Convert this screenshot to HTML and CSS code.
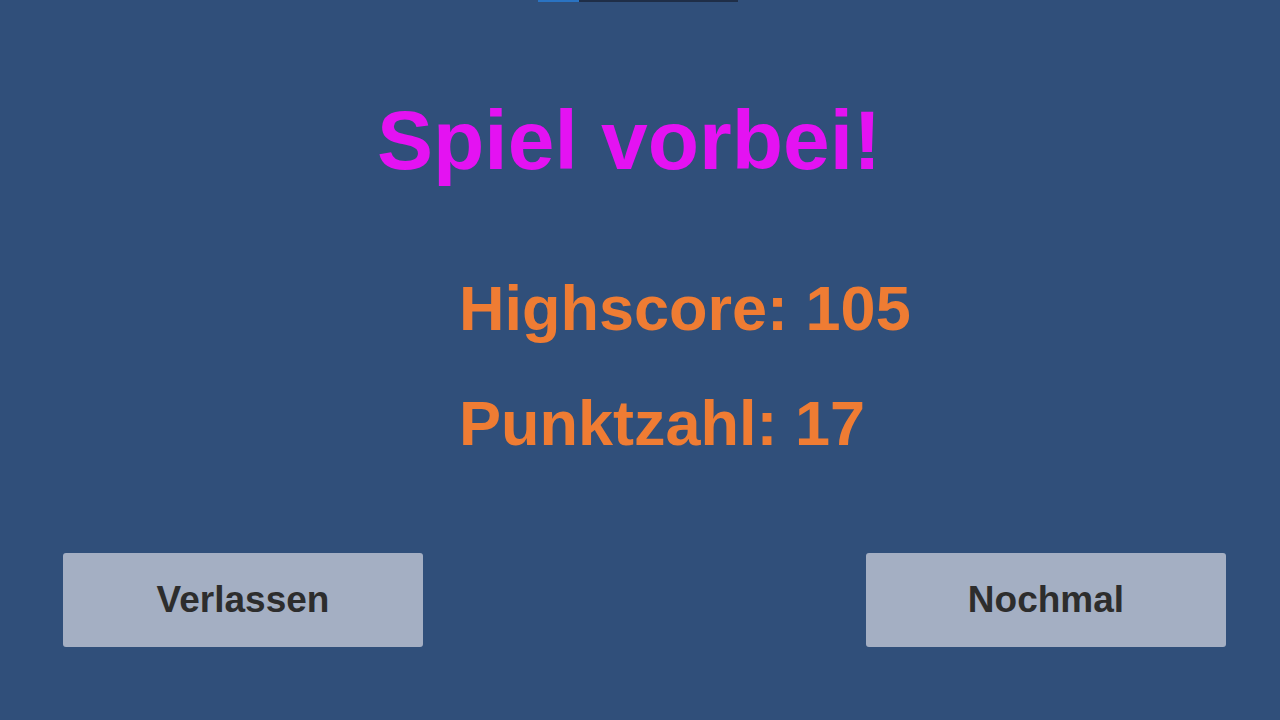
FILE: index.html
```html
<!DOCTYPE html>
<html lang="de">
<head>
    <meta charset="UTF-8">
    <meta name="viewport" content="width=device-width, initial-scale=1.0">
    <title>Spiel vorbei</title>
    <link rel="stylesheet" href="styles.css">
</head>
<body>

    <!-- Loading strip at the top -->
    <div class="strip">
        <div class="strip-fill"></div>
        <div class="strip-rest"></div>
    </div>

    <h1 class="title">Spiel vorbei!</h1>

    <!-- Score section -->
    <div class="scores">
        <p id="highscore">Highscore: 105</p>
        <p id="score">Punktzahl: 17</p>
    </div>

    <!-- Buttons -->
    <div class="actions">
        <button onclick="leaveGame()">Verlassen</button>
        <button onclick="playAgain()">Nochmal</button>
    </div>

    <script>
        function leaveGame() {
            window.close();
        }

        function playAgain() {
            location.reload();
        }
    </script>

</body>
</html>
```

FILE: styles.css
```css
body {
    margin: 0;
    height: 720px;
    background-color: #304f7a;
    font-family: "Liberation Sans", Arial, sans-serif;
    font-weight: bold;
    overflow: hidden;
}
/* Thin strip on the upper edge */
.strip {
    display: flex;
    height: 2px;
    padding-left: 538px;
}
.strip-fill {
    width: 41px;
    background-color: #2a73c2;
}
.strip-rest {
    width: 159px;
    background-color: #1f2e47;
}
.title {
    margin: 88px 0 0 0;
    padding-left: 377px;
    font-size: 84px;
    line-height: 100px;
    color: #e412f2;
}
.scores {
    margin-top: 61px;
    padding-left: 459px;
}
.scores p {
    margin: 0;
    font-size: 63px;
    line-height: 115px;
    color: #ef7c33;
}
/* Bottom row with the two buttons */
.actions {
    display: flex;
    justify-content: space-between;
    margin-top: 72px;
    padding: 0 54px 0 63px;
}
button {
    width: 360px;
    height: 94px;
    border: none;
    border-radius: 3px;
    background-color: #a4afc3;
    color: #2d2d2d;
    font-family: "Liberation Sans", Arial, sans-serif;
    font-weight: bold;
    font-size: 37px;
    cursor: pointer;
}
```
